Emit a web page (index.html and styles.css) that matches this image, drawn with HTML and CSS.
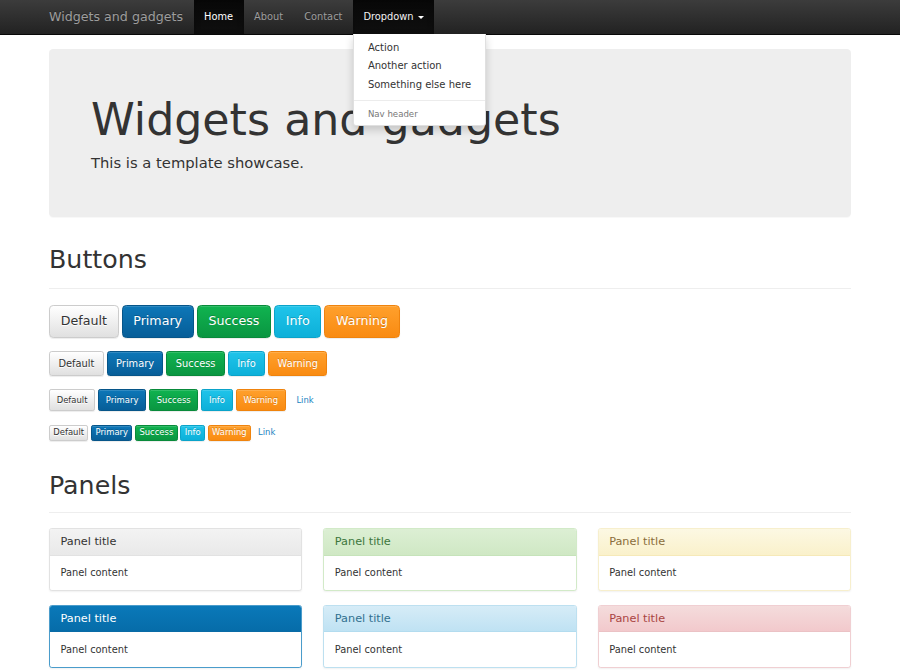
FILE: index.html
```html
<!DOCTYPE html>
<html lang="en">
<head>
<meta charset="utf-8">
<title>Widgets and gadgets</title>
<link rel="stylesheet" href="styles.css">
</head>
<body>
<nav class="navbar">
  <div class="container nav-inner">
    <a class="brand" href="#">Widgets and gadgets</a>
    <ul class="nav">
      <li class="active"><a href="#">Home</a></li>
      <li><a href="#">About</a></li>
      <li><a href="#">Contact</a></li>
      <li class="open"><a href="#">Dropdown <span class="caret"></span></a>
        <ul class="dropdown-menu">
          <li><a href="#">Action</a></li>
          <li><a href="#">Another action</a></li>
          <li><a href="#">Something else here</a></li>
          <li class="divider"></li>
          <li class="dropdown-header">Nav header</li>
        </ul>
      </li>
    </ul>
  </div>
</nav>

<main class="container page">
  <div class="jumbotron">
    <h1>Widgets and gadgets</h1>
    <p class="lead">This is a template showcase.</p>
  </div>

  <div class="page-header"><h1>Buttons</h1></div>
  <div class="buttons">
    <div class="btn-row">
      <button class="btn btn-lg btn-default">Default</button>
      <button class="btn btn-lg btn-primary">Primary</button>
      <button class="btn btn-lg btn-success">Success</button>
      <button class="btn btn-lg btn-info">Info</button>
      <button class="btn btn-lg btn-warning">Warning</button>
    </div>
    <div class="btn-row">
      <button class="btn btn-default">Default</button>
      <button class="btn btn-primary">Primary</button>
      <button class="btn btn-success">Success</button>
      <button class="btn btn-info">Info</button>
      <button class="btn btn-warning">Warning</button>
    </div>
    <div class="btn-row">
      <button class="btn btn-sm btn-default">Default</button>
      <button class="btn btn-sm btn-primary">Primary</button>
      <button class="btn btn-sm btn-success">Success</button>
      <button class="btn btn-sm btn-info">Info</button>
      <button class="btn btn-sm btn-warning">Warning</button>
      <button class="btn btn-sm btn-link">Link</button>
    </div>
    <div class="btn-row btn-row-xs">
      <button class="btn btn-xs btn-default">Default</button>
      <button class="btn btn-xs btn-primary">Primary</button>
      <button class="btn btn-xs btn-success">Success</button>
      <button class="btn btn-xs btn-info">Info</button>
      <button class="btn btn-xs btn-warning">Warning</button>
      <button class="btn btn-xs btn-link">Link</button>
    </div>
  </div>

  <div class="page-header panels-header"><h1>Panels</h1></div>
  <div class="panels">
    <div class="col">
      <div class="panel panel-default">
        <div class="panel-heading"><h3 class="panel-title">Panel title</h3></div>
        <div class="panel-body">Panel content</div>
      </div>
      <div class="panel panel-primary">
        <div class="panel-heading"><h3 class="panel-title">Panel title</h3></div>
        <div class="panel-body">Panel content</div>
      </div>
    </div>
    <div class="col">
      <div class="panel panel-success">
        <div class="panel-heading"><h3 class="panel-title">Panel title</h3></div>
        <div class="panel-body">Panel content</div>
      </div>
      <div class="panel panel-info">
        <div class="panel-heading"><h3 class="panel-title">Panel title</h3></div>
        <div class="panel-body">Panel content</div>
      </div>
    </div>
    <div class="col">
      <div class="panel panel-warning">
        <div class="panel-heading"><h3 class="panel-title">Panel title</h3></div>
        <div class="panel-body">Panel content</div>
      </div>
      <div class="panel panel-danger">
        <div class="panel-heading"><h3 class="panel-title">Panel title</h3></div>
        <div class="panel-body">Panel content</div>
      </div>
    </div>
  </div>
</main>
</body>
</html>
```

FILE: styles.css
```css
* { box-sizing: border-box; }
html, body { margin: 0; padding: 0; }
body {
  font-family: "DejaVu Sans", "Liberation Sans", sans-serif;
  font-size: 9.84px;
  line-height: 14.06px;
  color: #333;
  background: #fff;
}
a { text-decoration: none; }
.container { width: 802px; margin: 0 auto; }

/* Navbar */
.navbar {
  height: 35px;
  background: linear-gradient(#3c3c3c, #222);
  border-bottom: 1px solid #080808;
}
.nav-inner { display: flex; height: 100%; }
.brand {
  margin-left: -10.5px;
  padding: 0 10.5px;
  font-size: 12.65px;
  line-height: 34px;
  color: #9d9d9d;
  text-shadow: 0 -1px 0 rgba(0,0,0,.25);
}
.nav { display: flex; list-style: none; margin: 0; padding: 0; }
.nav > li { position: relative; }
.nav > li > a {
  display: block;
  padding: 0 10.5px;
  line-height: 34px;
  color: #9d9d9d;
  text-shadow: 0 -1px 0 rgba(0,0,0,.25);
}
.nav > li.active > a,
.nav > li.open > a {
  color: #fff;
  background: linear-gradient(#080808, #0f0f0f);
  box-shadow: inset 0 2px 6px rgba(0,0,0,.25);
}
.nav > li.open > a { color: #f2f2f2; }
.caret {
  display: inline-block;
  width: 0; height: 0;
  margin-left: 1px;
  vertical-align: middle;
  border-top: 3px solid #fff;
  border-left: 3px solid transparent;
  border-right: 3px solid transparent;
}
.dropdown-menu {
  position: absolute;
  top: 100%;
  left: 0;
  z-index: 10;
  min-width: 112px;
  margin: 0;
  padding: 4.8px 0 2.5px;
  list-style: none;
  background: #fff;
  border: 1px solid rgba(0,0,0,.12);
  border-top: 0;
  border-radius: 0 0 3px 3px;
  box-shadow: 0 4px 8px rgba(0,0,0,.175);
}
.dropdown-menu a {
  display: block;
  padding: 2.1px 14px;
  font-size: 10px;
  line-height: 14.4px;
  color: #333;
  white-space: nowrap;
}
.dropdown-menu .divider { height: 1px; margin: 5px 0 4.5px; background: #ececec; }
.dropdown-menu .dropdown-header {
  padding: 1.5px 14px;
  font-size: 8.6px;
  line-height: 14.06px;
  color: #777;
}

/* Page */
.page { padding-top: 14px; padding-bottom: 20px; }
.jumbotron {
  background: #eee;
  border-radius: 4.2px;
  padding: 33px 42px 34px;
  box-shadow: 0 1px 1px rgba(0,0,0,.03);
}
.jumbotron h1 {
  font-size: 44.3px;
  line-height: 48.7px;
  margin: 14px 0 7px;
  font-weight: normal;
}
.lead { font-size: 14.76px; line-height: 21.1px; margin: 0 0 10.5px; }

.page-header {
  margin-top: 29px;
  padding-bottom: 6px;
  border-bottom: 1px solid #eee;
}
.page-header h1 {
  font-size: 25.3px;
  line-height: 27.8px;
  margin: 0 0 8px;
  font-weight: normal;
}
.panels-header { margin-top: 31px; padding-bottom: 5px; }

/* Buttons */
.buttons { padding-top: 16px; }
.btn-row { display: flex; align-items: flex-start; gap: 3px; margin-bottom: 13.5px; }
.btn {
  display: inline-block;
  margin: 0;
  font-family: inherit;
  font-size: 9.84px;
  line-height: 14.06px;
  padding: 4.2px 8.4px;
  border: 1px solid transparent;
  border-radius: 2.8px;
  white-space: nowrap;
  text-align: center;
  cursor: pointer;
  color: #fff;
  text-shadow: 0 -1px 0 rgba(0,0,0,.2);
  box-shadow: inset 0 1px 0 rgba(255,255,255,.15), 0 1px 1px rgba(0,0,0,.075);
}
.btn-lg { font-size: 12.65px; line-height: 16.87px; padding: 7px 10.7px; border-radius: 4.2px; }
.btn-sm { font-size: 8.44px; line-height: 12.66px; padding: 3.5px 6.7px; border-radius: 2.1px; }
.btn-xs { font-size: 8.44px; line-height: 12.66px; padding: 0.7px 3.3px; border-radius: 2.1px; }
.btn-row-xs { gap: 2.8px; }

.btn-default {
  color: #333;
  background: linear-gradient(#fff, #e0e0e0);
  border-color: #ccc;
  text-shadow: 0 1px 0 #fff;
}
.btn-primary { background: linear-gradient(#0d77b8, #075e98); border-color: #065589; }
.btn-success { background: linear-gradient(#10b350, #0a9641); border-color: #088a3a; }
.btn-info { background: linear-gradient(#1fc4ea, #0db0d9); border-color: #0aa3c9; }
.btn-warning { background: linear-gradient(#ffa02c, #f98b12); border-color: #ef830d; }
.btn-link {
  color: #1a84bf;
  background: transparent;
  border-color: transparent;
  box-shadow: none;
  text-shadow: none;
}

/* Panels */
.panels {
  display: grid;
  grid-template-columns: repeat(3, 1fr);
  column-gap: 21px;
  margin-top: 15px;
}
.panel {
  background: #fff;
  border: 1px solid #e2e2e2;
  border-radius: 2.8px;
  box-shadow: 0 1px 2px rgba(0,0,0,.06);
  margin-bottom: 14px;
  overflow: hidden;
}
.panel-heading {
  padding: 6.8px 10.5px 6px;
  border-bottom: 1px solid transparent;
}
.panel-title {
  margin: 0;
  font-size: 11.25px;
  line-height: 12.4px;
  font-weight: normal;
}
.panel-body { padding: 10.3px 10.5px; }

.panel-default { border-color: #e2e2e2; }
.panel-default .panel-heading { background: linear-gradient(#f3f3f3, #e9e9e9); border-bottom-color: #e2e2e2; color: #333; }
.panel-primary { border-color: #4a9ccb; }
.panel-primary .panel-heading { background: linear-gradient(#0a79b9, #066ca9); border-bottom-color: #0a6ba6; color: #fff; }
.panel-success { border-color: #d2eac8; }
.panel-success .panel-heading { background: linear-gradient(#dcefd4, #cfe8c4); border-bottom-color: #c6e3ba; color: #3c763d; }
.panel-info { border-color: #bde0f0; }
.panel-info .panel-heading { background: linear-gradient(#d6ecf7, #bfe2f3); border-bottom-color: #b3dcef; color: #31708f; }
.panel-warning { border-color: #f7efcd; }
.panel-warning .panel-heading { background: linear-gradient(#fcf8e3, #faf1cb); border-bottom-color: #f6e9b8; color: #8a6d3b; }
.panel-danger { border-color: #f0cfd2; }
.panel-danger .panel-heading { background: linear-gradient(#f4dcdc, #f2c9cc); border-bottom-color: #ebc2c5; color: #a94442; }
```
